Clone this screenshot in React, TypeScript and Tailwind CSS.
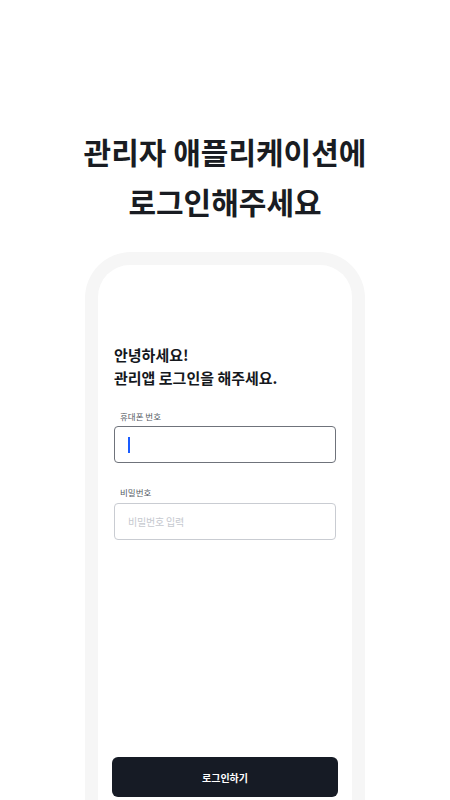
const font = "font-['Pretendard','Noto_Sans_CJK_KR',sans-serif]";

export default function App() {
  return (
    <div className={`h-[800px] w-full overflow-hidden bg-white ${font}`}>
      <h1 className="pt-[126px] text-center text-[30px] font-bold leading-[50px] text-[#191c22]">
        관리자 애플리케이션에
        <br />
        로그인해주세요
      </h1>

      {/* phone frame */}
      <div className="mx-auto mt-[26px] w-[280px] rounded-t-[46px] bg-[#f6f6f6] px-[13px] pt-[13px]">
        <div className="h-[560px] rounded-t-[32px] bg-white px-4 pt-[78px]">
          <p className="text-[15px] font-bold leading-[23px] text-[#15181d]">
            안녕하세요!
            <br />
            관리앱 로그인을 해주세요.
          </p>

          <label className="mt-[21px] block pl-[6px] text-[8.5px] leading-[12px] text-[#555a63]">
            휴대폰 번호
          </label>
          <div className="mt-[4px] flex h-[37px] w-[222px] items-center rounded-[4px] border border-[#6f737b] px-[13px]">
            <span className="h-[16px] w-[1.5px] bg-[#1a5cff]" />
          </div>

          <label className="mt-[23px] block pl-[6px] text-[8.5px] leading-[12px] text-[#555a63]">
            비밀번호
          </label>
          <div className="mt-[5px] flex h-[37px] w-[222px] items-center rounded-[4px] border border-[#c9ccd2] px-[13px]">
            <span className="text-[10px] tracking-[-0.02em] text-[#c6c9cf]">비밀번호 입력</span>
          </div>

          <button className="-mx-0.5 mt-[217px] flex h-[40px] w-[226px] items-center justify-center rounded-[6px] bg-[#161b25] text-[10px] font-bold text-white">
            로그인하기
          </button>
        </div>
      </div>
    </div>
  );
}
